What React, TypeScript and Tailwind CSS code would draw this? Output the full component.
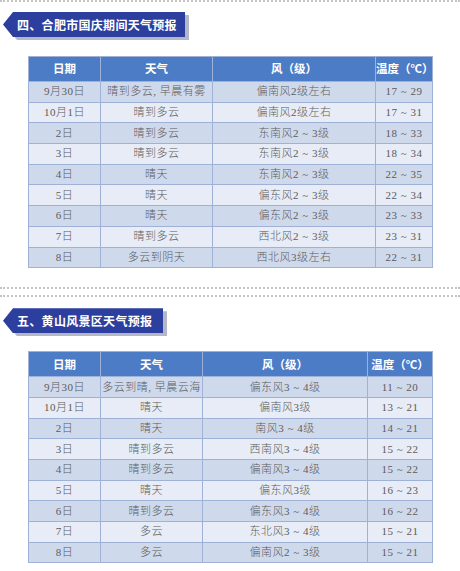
import React from "react";

type Row = [string, string, string, string];

const t1: Row[] = [
  ["9月30日", "晴到多云, 早晨有雾", "偏南风2级左右", "17 ~ 29"],
  ["10月1日", "晴到多云", "偏南风2级左右", "17 ~ 31"],
  ["2日", "晴到多云", "东南风2 ~ 3级", "18 ~ 33"],
  ["3日", "晴到多云", "东南风2 ~ 3级", "18 ~ 34"],
  ["4日", "晴天", "东南风2 ~ 3级", "22 ~ 35"],
  ["5日", "晴天", "偏东风2 ~ 3级", "22 ~ 34"],
  ["6日", "晴天", "偏东风2 ~ 3级", "23 ~ 33"],
  ["7日", "晴到多云", "西北风2 ~ 3级", "23 ~ 31"],
  ["8日", "多云到阴天", "西北风3级左右", "22 ~ 31"],
];

const t2: Row[] = [
  ["9月30日", "多云到晴, 早晨云海", "偏东风3 ~ 4级", "11 ~ 20"],
  ["10月1日", "晴天", "偏南风3级", "13 ~ 21"],
  ["2日", "晴天", "南风3 ~ 4级", "14 ~ 21"],
  ["3日", "晴到多云", "西南风3 ~ 4级", "15 ~ 22"],
  ["4日", "晴到多云", "偏南风3 ~ 4级", "15 ~ 22"],
  ["5日", "晴天", "偏东风3级", "16 ~ 23"],
  ["6日", "晴到多云", "偏东风3 ~ 4级", "16 ~ 22"],
  ["7日", "多云", "东北风3 ~ 4级", "15 ~ 21"],
  ["8日", "多云", "偏南风2 ~ 3级", "15 ~ 21"],
];

function Banner({ text, width }: { text: string; width: number }) {
  return (
    <div className="relative ml-[3px] h-[25px]" style={{ width }}>
      <div className="absolute left-[4px] top-[3px] h-[25px] w-full bg-[#b4b8c6] [clip-path:polygon(10px_0,100%_0,100%_100%,10px_100%,0_50%)]" />
      <div className="relative flex h-[25px] w-full items-center bg-[#2c3f9f] pl-[14px] [clip-path:polygon(10px_0,100%_0,100%_100%,10px_100%,0_50%)]">
        <span className="whitespace-nowrap text-[12px] font-bold leading-none tracking-[0.3px] text-white [font-family:'Noto_Sans_CJK_SC',sans-serif]">
          {text}
        </span>
      </div>
    </div>
  );
}

function WeatherTable({ rows, cols }: { rows: Row[]; cols: number[] }) {
  const cell = "border border-[#9fb1d6] text-center p-0 whitespace-nowrap";
  return (
    <table className="ml-[28px] w-[404px] table-fixed border-collapse">
      <colgroup>
        {cols.map((w, i) => (
          <col key={i} style={{ width: w }} />
        ))}
      </colgroup>
      <thead>
        <tr className="h-[25px] bg-[#4d7cc6]">
          {["日期", "天气", "风（级）", "温度（℃）"].map((h, i) => (
            <th
              key={i}
              className={`${cell} border-[#7d9bd0] text-[11.5px] font-bold text-white [font-family:'Noto_Sans_CJK_SC',sans-serif]`}
            >
              {h}
            </th>
          ))}
        </tr>
      </thead>
      <tbody>
        {rows.map((r, i) => (
          <tr key={i} className={`h-[20.7px] ${i % 2 === 0 ? "bg-[#cfd9ec]" : "bg-[#e7ecf6]"}`}>
            {r.map((c, j) => (
              <td
                key={j}
                className={`${cell} text-[11px] font-light leading-none tracking-[0.5px] text-[#5c5c5c] [font-family:'Liberation_Serif','Noto_Sans_CJK_SC',serif]`}
              >
                {c}
              </td>
            ))}
          </tr>
        ))}
      </tbody>
    </table>
  );
}

export default function App() {
  return (
    <div className="relative h-[571px] w-[460px] overflow-hidden bg-white">
      <div className="h-[2px] border-t-2 border-dotted border-[#c4c4c4]" />
      <div className="mt-[10px]">
        <Banner text="四、合肥市国庆期间天气预报" width={182} />
      </div>
      <div className="mt-[19px]">
        <WeatherTable rows={t1} cols={[72, 112, 163, 57]} />
      </div>
      <div className="mt-[19px] h-[2px] border-t-2 border-dotted border-[#c4c4c4]" />
      <div className="mt-[6px] h-[2px] border-t-2 border-dotted border-[#c4c4c4]" />
      <div className="mt-[11px]">
        <Banner text="五、黄山风景区天气预报" width={160} />
      </div>
      <div className="mt-[18px]">
        <WeatherTable rows={t2} cols={[72, 102, 165, 65]} />
      </div>
    </div>
  );
}
